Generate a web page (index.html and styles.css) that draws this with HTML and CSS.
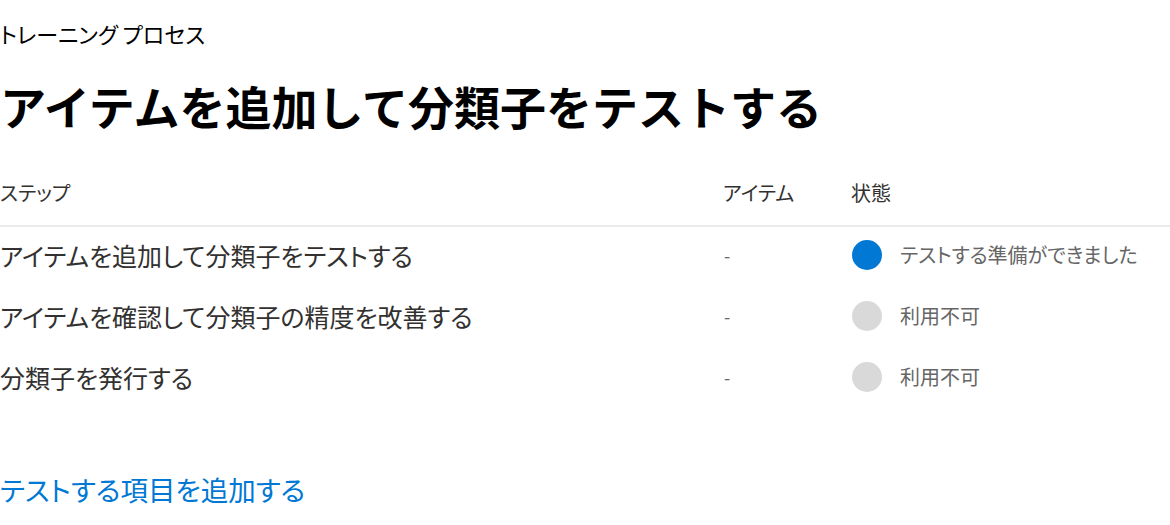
FILE: index.html
```html
<!DOCTYPE html>
<html lang="ja">
<head>
<meta charset="utf-8">
<link rel="stylesheet" href="styles.css">
</head>
<body>
<main class="page">
  <div class="eyebrow">トレーニング プロセス</div>
  <h1 class="title">アイテムを追加して分類子をテストする</h1>
  <div class="table">
    <div class="row head">
      <div class="c-step">ステップ</div>
      <div class="c-items">アイテム</div>
      <div class="c-status">状態</div>
    </div>
    <div class="row first">
      <div class="c-step step">アイテムを追加して分類子をテストする</div>
      <div class="c-items dash">-</div>
      <div class="c-status status"><span class="dot ready"></span>テストする準備ができました</div>
    </div>
    <div class="row">
      <div class="c-step step">アイテムを確認して分類子の精度を改善する</div>
      <div class="c-items dash">-</div>
      <div class="c-status status"><span class="dot"></span>利用不可</div>
    </div>
    <div class="row">
      <div class="c-step step">分類子を発行する</div>
      <div class="c-items dash">-</div>
      <div class="c-status status"><span class="dot"></span>利用不可</div>
    </div>
  </div>
  <a class="link" href="#">テストする項目を追加する</a>
</main>
</body>
</html>
```
FILE: styles.css
```css
html, body { margin: 0; padding: 0; background: #fff; }
body {
  font-family: "Noto Sans CJK JP", "Noto Sans", sans-serif;
  color: #323130;
  width: 1170px;
  height: 525px;
  overflow: hidden;
  font-feature-settings: "palt";
}
.page { display: flex; flex-direction: column; }
.eyebrow {
  font-size: 22px;
  line-height: 24px;
  margin-top: 21px;
  color: #000;
}
.title {
  margin: 0;
  margin-top: 30px;
  font-size: 46px;
  line-height: 60px;
  font-weight: 700;
  color: #000;
  font-feature-settings: normal;
}
.table { display: flex; flex-direction: column; margin-top: 33px; }
.row {
  display: flex;
  align-items: center;
  height: 61px;
}
.row.head {
  height: 59px;
  border-bottom: 2px solid #ebebeb;
  align-items: flex-start;
  font-size: 20px;
  line-height: 30px;
  color: #323130;
  padding-top: 10px;
  box-sizing: border-box;
}
.row.first { margin-top: -3px; }
.c-step { width: 723px; }
.c-items { width: 128px; }
.c-status { flex: 1; display: flex; align-items: center; }
.step { font-size: 25px; color: #323130; }
.dash { color: #666; font-size: 18px; padding-left: 1px; }
.status { font-size: 20px; color: #666; }
.dot {
  width: 30px; height: 30px; border-radius: 50%;
  background: #d9d9d9; margin-right: 18px; flex: none;
}
.dot.ready { background: #0078d4; }
.link {
  margin-top: 65px;
  font-size: 27.5px;
  line-height: 34px;
  color: #0078d4;
  text-decoration: none;
  align-self: flex-start;
}
```
